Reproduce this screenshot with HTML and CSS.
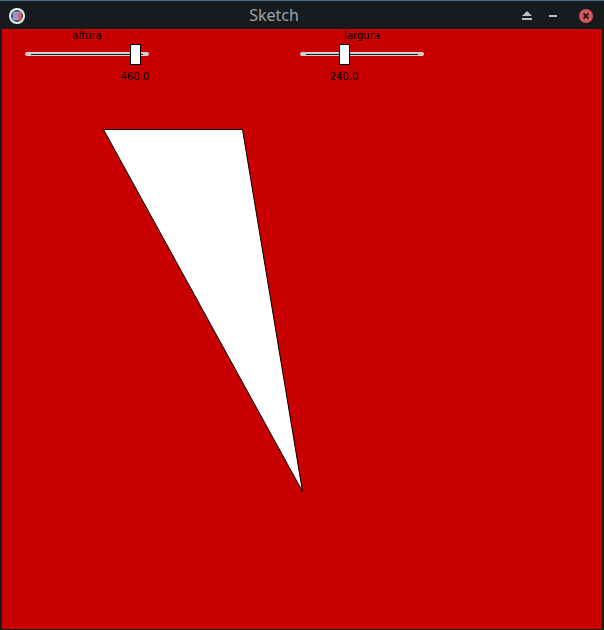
FILE: index.html
```html
<!DOCTYPE html>
<html>
<head>
<meta charset="utf-8">
<link rel="stylesheet" href="styles.css">
</head>
<body>
<div class="window">
  <div class="titlebar">
    <div class="app-icon">
      <svg width="18" height="18" viewBox="0 0 18 18">
        <circle cx="9" cy="9" r="8" fill="#f2f2f2"/>
        <circle cx="9" cy="9" r="6" fill="#2a2f33"/>
        <rect x="5" y="5" width="8" height="8" fill="#9d8fd0"/>
        <rect x="5" y="5" width="8" height="8" fill="none" stroke="#6fb3c8" stroke-width="1"/>
        <rect x="10" y="6" width="3" height="7" fill="#d9636f"/>
      </svg>
    </div>
    <div class="title">Sketch</div>
    <div class="controls">
      <span class="btn eject">
        <svg width="10" height="9" viewBox="0 0 10 9"><polygon points="5,0 10,5 0,5" fill="#b8c0c4"/><rect x="0" y="7" width="10" height="2" fill="#b8c0c4"/></svg>
      </span>
      <span class="btn minimize">
        <svg width="8" height="2" viewBox="0 0 8 2"><rect width="8" height="2" fill="#b8c0c4"/></svg>
      </span>
      <span class="btn close">
        <svg width="14" height="14" viewBox="0 0 14 14"><circle cx="7" cy="7" r="7" fill="#d4575a"/><path d="M4.5 4.5 L9.5 9.5 M9.5 4.5 L4.5 9.5" stroke="#2a1a1a" stroke-width="1.8"/></svg>
      </span>
    </div>
  </div>
  <div class="canvas">
    <div class="slider s-altura">
      <div class="slider-label">altura</div>
      <div class="track"><div class="inner"></div></div>
      <div class="handle h-altura"></div>
      <div class="value v-altura">460.0</div>
    </div>
    <div class="slider s-largura">
      <div class="slider-label">largura</div>
      <div class="track"><div class="inner"></div></div>
      <div class="handle h-largura"></div>
      <div class="value v-largura">240.0</div>
    </div>
    <svg class="shape" width="600" height="600" viewBox="0 0 600 600">
      <polygon points="101.5,100.5 240.5,100.5 300.5,462.5" fill="#ffffff" stroke="#000" stroke-width="1"/>
    </svg>
  </div>
</div>
</body>
</html>
```
FILE: styles.css
```css
html, body {
  margin: 0;
  padding: 0;
  background: #171b1e;
}
.window {
  width: 604px;
  height: 630px;
  background: #171b1e;
  box-sizing: border-box;
  border-top: 1px solid #4c6b86;
  display: flex;
  flex-direction: column;
}
.titlebar {
  height: 28px;
  display: flex;
  align-items: center;
  position: relative;
  font-family: "Noto Sans", sans-serif;
}
.app-icon {
  width: 18px;
  height: 18px;
  margin-left: 8px;
  margin-top: 1px;
}
.app-icon svg { display: block; }
.title {
  flex: 1;
  text-align: center;
  color: #9aa3a8;
  font-size: 16px;
  margin-left: 0;
}
.controls {
  display: flex;
  align-items: center;
  margin-right: 11px;
}
.btn { display: flex; align-items: center; justify-content: center; }
.btn svg { display: block; }
.eject { margin-right: 17px; margin-top: 1px; }
.minimize { margin-right: 22px; margin-top: 1px; }
.close { margin-top: 1px; }
.canvas {
  margin: 0 2px;
  width: 600px;
  height: 600px;
  background: #c80000;
  position: relative;
  overflow: hidden;
  font-family: "DejaVu Sans", sans-serif;
  font-size: 10px;
  color: #000;
}
.slider {
  position: absolute;
  top: 0;
  width: 124px;
  height: 60px;
}
.s-altura { left: 23px; }
.s-largura { left: 298px; }
.slider-label {
  position: absolute;
  top: 0;
  left: 0;
  width: 124px;
  text-align: center;
  line-height: 14px;
}
.track {
  position: absolute;
  top: 23px;
  left: 0;
  width: 124px;
  height: 4px;
  background: #cfcfcf;
  border-radius: 2px;
}
.inner {
  position: absolute;
  left: 6px;
  right: 6px;
  top: 1.5px;
  height: 1px;
  background: #1e1e1e;
}
.handle {
  position: absolute;
  top: 15px;
  width: 9px;
  height: 19px;
  background: #fff;
  border: 1px solid #000;
}
.h-altura { left: 105px; }
.h-largura { left: 39px; }
.value {
  position: absolute;
  top: 41px;
  width: 60px;
  text-align: center;
  line-height: 14px;
}
.v-altura { left: 80px; }
.v-largura { left: 14px; }
.shape {
  position: absolute;
  left: 0;
  top: 0;
}
```
